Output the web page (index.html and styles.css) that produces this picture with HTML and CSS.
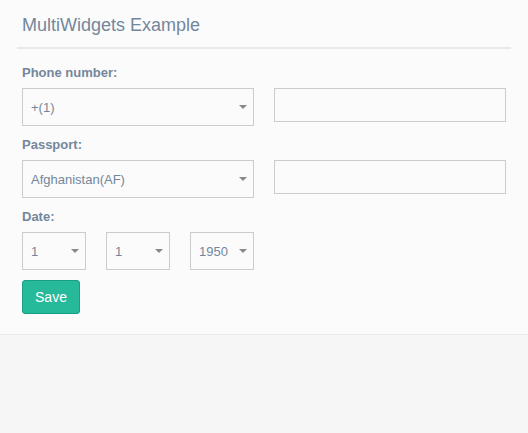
FILE: index.html
```html
<!DOCTYPE html>
<html>
<head>
<meta charset="utf-8">
<link rel="stylesheet" href="styles.css">
</head>
<body>
<div class="panel">
  <div class="panel-title"><h2>MultiWidgets Example</h2></div>
  <form class="panel-content">
    <div class="group">
      <label class="label">Phone number:</label>
      <div class="row">
        <div class="select-wrap wide"><select class="select"><option>+(1)</option></select></div>
        <input class="input" type="text">
      </div>
    </div>
    <div class="group">
      <label class="label">Passport:</label>
      <div class="row">
        <div class="select-wrap wide"><select class="select"><option>Afghanistan(AF)</option></select></div>
        <input class="input" type="text">
      </div>
    </div>
    <div class="group">
      <label class="label">Date:</label>
      <div class="date-row">
        <div class="select-wrap small"><select class="select"><option>1</option></select></div>
        <div class="select-wrap small"><select class="select"><option>1</option></select></div>
        <div class="select-wrap small"><select class="select"><option>1950</option></select></div>
      </div>
    </div>
    <button class="btn" type="button">Save</button>
  </form>
</div>
</body>
</html>
```
FILE: styles.css
```css
html, body {
  margin: 0;
  padding: 0;
  background: #f6f6f6;
  font-family: "Liberation Sans", Arial, sans-serif;
  font-size: 13px;
  color: #73879C;
}
.panel {
  background: #fbfbfb;
  border-bottom: 1px solid #ebebeb;
  padding: 10px 17px 20px;
}
.panel-title {
  border-bottom: 2px solid #E6E9ED;
  padding: 1px 5px 6px;
}
.panel-title h2 {
  margin: 5px 0 7px;
  font-size: 18px;
  font-weight: 400;
  line-height: 18px;
  color: #73879C;
}
.panel-content {
  padding: 15px 5px 0;
  margin: 0;
}
.group {
  margin-bottom: 10px;
}
.label {
  display: block;
  font-weight: 700;
  line-height: 18px;
  margin-bottom: 6px;
}
.row {
  display: grid;
  grid-template-columns: 232px 232px;
  column-gap: 20px;
  align-items: start;
}
.date-row {
  display: flex;
  gap: 20px;
}
.select-wrap {
  position: relative;
  height: 38px;
}
.select-wrap.small {
  width: 64px;
}
.select-wrap::after {
  content: "";
  position: absolute;
  right: 7px;
  top: 17px;
  border-left: 4px solid transparent;
  border-right: 4px solid transparent;
  border-top: 4px solid #888;
  pointer-events: none;
}
.select {
  -webkit-appearance: none;
  appearance: none;
  box-sizing: border-box;
  width: 100%;
  height: 38px;
  margin: 0;
  border: 1px solid #ccc;
  border-radius: 0;
  background: #fbfbfb;
  padding: 0 20px 0 8px;
  font-family: inherit;
  font-size: 13px;
  color: #73879C;
  outline: none;
}
.input {
  box-sizing: border-box;
  height: 34px;
  width: 232px;
  margin: 0;
  border: 1px solid #ccc;
  border-radius: 0;
  background: #fbfbfb;
  padding: 6px 12px;
  font-family: inherit;
  font-size: 13px;
  outline: none;
}
.btn {
  display: block;
  box-sizing: border-box;
  height: 34px;
  width: 58px;
  padding: 0;
  margin: 0;
  background: #26B99A;
  border: 1px solid #169F85;
  border-radius: 3px;
  color: #fff;
  font-family: inherit;
  font-size: 14px;
}
```
